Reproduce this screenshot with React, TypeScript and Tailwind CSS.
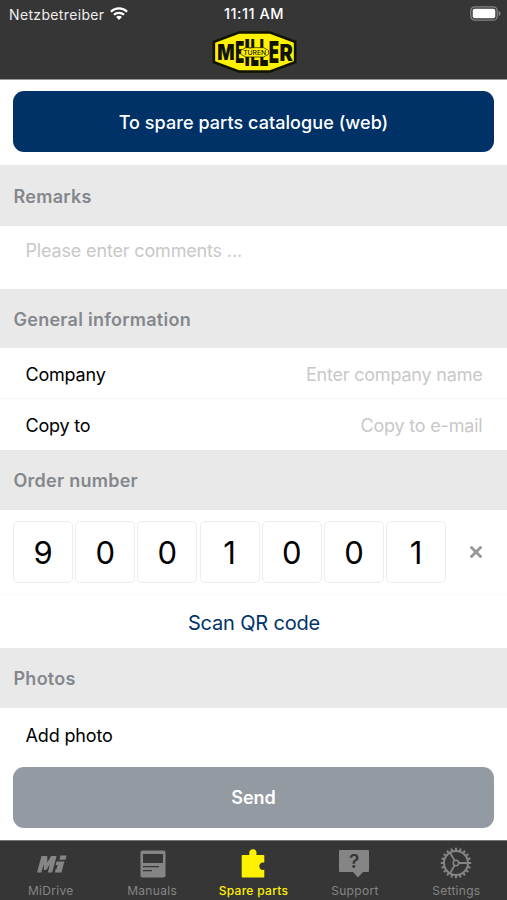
import type { ReactNode } from "react";

type Letter = { ch: string; x: number; w: number; top: number; bottom: number };

// Every letter is stretched to follow the tapering outline of the badge.
const LETTERS: Letter[] = [
  { ch: "M", x: 15, w: 52, top: 41, bottom: 88 },
  { ch: "E", x: 69, w: 27, top: 31, bottom: 97 },
  { ch: "I", x: 97, w: 16, top: 23, bottom: 104 },
  { ch: "L", x: 115, w: 25, top: 23, bottom: 104 },
  { ch: "L", x: 142, w: 26, top: 23, bottom: 104 },
  { ch: "E", x: 170, w: 31, top: 31, bottom: 97 },
  { ch: "R", x: 202, w: 40, top: 40, bottom: 89 },
];

function Logo() {
  return (
    <svg viewBox="0 0 254 126" className="h-[42px] w-[85px] overflow-visible" aria-label="Meiller">
      <path d="M80 1H174L253 30V96L174 125H80L1 96V30Z" fill="#111200" />
      <path d="M81 8H173L245 35V91L173 118H81L9 91V35Z" fill="#fff200" />
      {LETTERS.map((l, i) => (
        <text
          key={i}
          transform={`translate(${l.x} ${l.bottom}) scale(1 ${(l.bottom - l.top) / 29.1})`}
          fontFamily="Inter, sans-serif"
          fontWeight="900"
          fontSize="40"
          textLength={l.w}
          lengthAdjust="spacingAndGlyphs"
          fill="#111200"
        >
          {l.ch}
        </text>
      ))}
      <path d="M101 50H154L169 58V70L154 78H101L86 70V58Z" fill="#fff200" stroke="#111200" strokeWidth="2" />
      <text x="93" y="71" fontFamily="Inter, sans-serif" fontWeight="500" fontSize="19" textLength="69" lengthAdjust="spacingAndGlyphs" fill="#111200">
        TÜREN
      </text>
    </svg>
  );
}

function WifiIcon() {
  return (
    <svg viewBox="0 0 18 13" className="-mt-[2px] ml-[6px] h-[13px] w-[18px]" fill="none" stroke="#fff" strokeWidth="2.2">
      <path d="M.9 4.7C5.4.3 12.6.3 17.1 4.7" />
      <path d="M3.9 7.8c2.9-2.7 7.3-2.7 10.2 0" />
      <path d="M9 12.9 6.1 10c1.6-1.6 4.2-1.6 5.8 0Z" fill="#fff" stroke="none" />
    </svg>
  );
}

function BatteryIcon() {
  return (
    <svg viewBox="0 0 31 15" className="-mt-[2px] h-[15px] w-[31px]">
      <rect x=".8" y=".8" width="26.4" height="13.4" rx="4" fill="none" stroke="#858585" strokeWidth="1.3" />
      <rect x="2.7" y="2.7" width="22.6" height="9.6" rx="2" fill="#fff" />
      <path d="M28.6 5v5c1.3-.5 2-1.4 2-2.5s-.7-2-2-2.5Z" fill="#858585" />
    </svg>
  );
}

function MiIcon() {
  return (
    <svg viewBox="0 0 30 18" className="ml-[2px] h-[18px] w-[30px]" fill="#858585">
      <path d="M4.500 1H10.200L10.400 7.500L14 1H19.600L15.200 17.500H10.800L13 9.500L9.300 15H7L6.600 9.500L4.400 17.500H0Z" />
      <path d="M19.500 6.500H27.400L24.500 17.500H17.800L18.700 14H19.600L20.500 10H18.500Z" />
      <path d="M23.500 .500H29.600L28.500 4.700H22.400Z" />
    </svg>
  );
}

function ManualIcon() {
  return (
    <svg viewBox="0 0 26 28" className="ml-[2px] h-7 w-[26px]">
      <rect x=".5" y=".5" width="25" height="27" rx="2" fill="#858585" />
      <path d="M3 4h20v9H3ZM3 16h16v1.300H3ZM3 20h9v1.300H3Z" fill="#363636" />
    </svg>
  );
}

function PuzzleIcon() {
  return (
    <svg viewBox="0 0 24 29" className="-ml-[2px] h-[29px] w-6" fill="#fff200">
      <path d="M1.500 6H7.500Q8.800 6 8.400 4.500C7.700 2.200 9.500.2 11.900.2S16 2.200 15.400 4.500Q15 6 16.300 6H22.500Q23.300 6 23.300 6.800V13.600H22.700C20.800 12.900 18.300 14.400 18.300 17.200S20.800 21.500 22.700 20.800H23.300V27.800Q23.300 28.600 22.500 28.600H1.500Q.700 28.600 .700 27.800V6.800Q.700 6 1.500 6Z" />
    </svg>
  );
}

function SupportIcon() {
  return (
    <svg viewBox="0 0 30 28" className="-ml-[2px] h-7 w-[30px]">
      <path d="M1 0H29Q30 0 30 1V21Q30 22 29 22H24L19 27.500L14 22H1Q0 22 0 21V1Q0 0 1 0Z" fill="#858585" />
      <text x="15.200" y="18" textAnchor="middle" fontFamily="Inter, sans-serif" fontWeight="600" fontSize="19" fill="#363636">?</text>
    </svg>
  );
}

const TEETH = Array.from({ length: 20 }, (_, i) => i * 18);

function GearIcon() {
  return (
    <svg viewBox="0 0 32 32" className="-mt-[2px] size-8" fill="none" stroke="#858585">
      <circle cx="16" cy="16" r="12" strokeWidth="2" />
      {TEETH.map((a) => (
        <path key={a} d="M16 .800V3.800" strokeWidth="2" transform={`rotate(${a} 16 16)`} />
      ))}
      <circle cx="16" cy="16" r="2.700" strokeWidth="1.600" />
      <path d="M18.700 16H28M14.600 13.600L10 5.600M14.600 18.400L10 26.400" strokeWidth="1.800" />
    </svg>
  );
}

function SectionTitle({ children, height = "h-[60px]" }: { children: ReactNode; height?: string }) {
  return (
    <h2 className={`${height} flex shrink-0 items-center bg-[#e9e9e9] px-[13.500px] pt-px text-[18px] font-semibold tracking-[0.26px] text-[#84888c]`}>
      {children}
    </h2>
  );
}

function Tab({ icon, label, active }: { icon: ReactNode; label: string; active?: boolean }) {
  return (
    <div className={`flex flex-1 flex-col items-center ${active ? "font-medium text-[#fff200]" : "text-[#858585]"}`}>
      <div className="flex h-[43px] items-center justify-center pt-[2px]">{icon}</div>
      <span className="whitespace-nowrap text-[12px] leading-[14px] tracking-[0.3px]">{label}</span>
    </div>
  );
}

export default function App() {
  return (
    <div className="flex h-[900px] w-[507px] flex-col overflow-hidden bg-white font-['Inter',sans-serif] text-black">
      <header className="flex h-[80px] shrink-0 flex-col border-b border-[#999] bg-[#363636]">
        <div className="grid h-[28px] grid-cols-3 items-center pr-[6px] pl-[9px] text-[14px] text-white">
          <div className="flex items-center tracking-[0.35px] text-[#eee]">
            Netzbetreiber
            <WifiIcon />
          </div>
          <div className="pr-[2px] text-center text-[14.500px] font-medium tracking-[0.500px]">11:11 AM</div>
          <div className="flex justify-end">
            <BatteryIcon />
          </div>
        </div>
        <div className="flex justify-center pt-[3px] pl-[2px]">
          <Logo />
        </div>
      </header>

      <div className="flex h-[85px] shrink-0 flex-col px-[13px] pt-[11px]">
        <button className="h-[61px] rounded-[11px] bg-[#003268] pt-[2px] text-[18px] font-medium tracking-[0.06px] text-white">To spare parts catalogue (web)</button>
      </div>
      <SectionTitle height="h-[61px]">Remarks</SectionTitle>
      <div className="h-[63px] shrink-0 px-[25.500px] pt-[11px] text-[18px] tracking-[-0.16px] text-[#c8c8c8]">Please enter comments ...</div>
      <SectionTitle height="h-[59px]">General information</SectionTitle>
      <div className="flex h-[51px] shrink-0 items-center justify-between border-b border-[#f6f6f6] pr-[24.500px] pl-[25.500px] pt-[2px] text-[18px] tracking-[-0.2px]">
        <span>Company</span>
        <span className="text-[#c8c8c8]">Enter company name</span>
      </div>
      <div className="flex h-[51px] shrink-0 items-center justify-between pr-[24.500px] pl-[25.500px] pt-[2px] text-[18px] tracking-[-0.2px]">
        <span>Copy to</span>
        <span className="text-[#c8c8c8]">Copy to e-mail</span>
      </div>
      <SectionTitle>Order number</SectionTitle>
      <div className="flex h-[85px] shrink-0 items-center border-b border-[#fafafa] pl-[13px]">
        <div className="flex gap-[2.200px]">
          {["9", "0", "0", "1", "0", "0", "1"].map((digit, i) => (
            <div key={i} className="flex h-[62px] w-[60px] items-center justify-center rounded-[5px] border border-[#ededed] pt-[2px] text-[31px]">
              {digit}
            </div>
          ))}
        </div>
        <svg viewBox="0 0 14 14" className="ml-[23px] size-[14px]" stroke="#999" strokeWidth="3" strokeLinecap="round">
          <path d="M2.500 2.500 11.500 11.500M11.500 2.500 2.500 11.500" />
        </svg>
      </div>
      <div className="flex h-[53px] shrink-0 items-center justify-center pt-[2px] pl-px text-[20px] tracking-[-0.18px] text-[#003268]">Scan QR code</div>
      <SectionTitle>Photos</SectionTitle>
      <div className="flex h-[59px] shrink-0 items-center px-[25.500px] pb-[4px] text-[18px] tracking-[-0.15px]">Add photo</div>
      <div className="flex h-[73px] shrink-0 flex-col px-[13px]">
        <button className="h-[61px] rounded-[11px] bg-[#949aa2] text-[18px] font-semibold text-white">Send</button>
      </div>
      <nav className="flex h-[60px] shrink-0 border-t border-[#777] bg-[#363636]">
        <Tab icon={<MiIcon />} label="MiDrive" />
        <Tab icon={<ManualIcon />} label="Manuals" />
        <Tab icon={<PuzzleIcon />} label="Spare parts" active />
        <Tab icon={<SupportIcon />} label="Support" />
        <Tab icon={<GearIcon />} label="Settings" />
      </nav>
    </div>
  );
}
